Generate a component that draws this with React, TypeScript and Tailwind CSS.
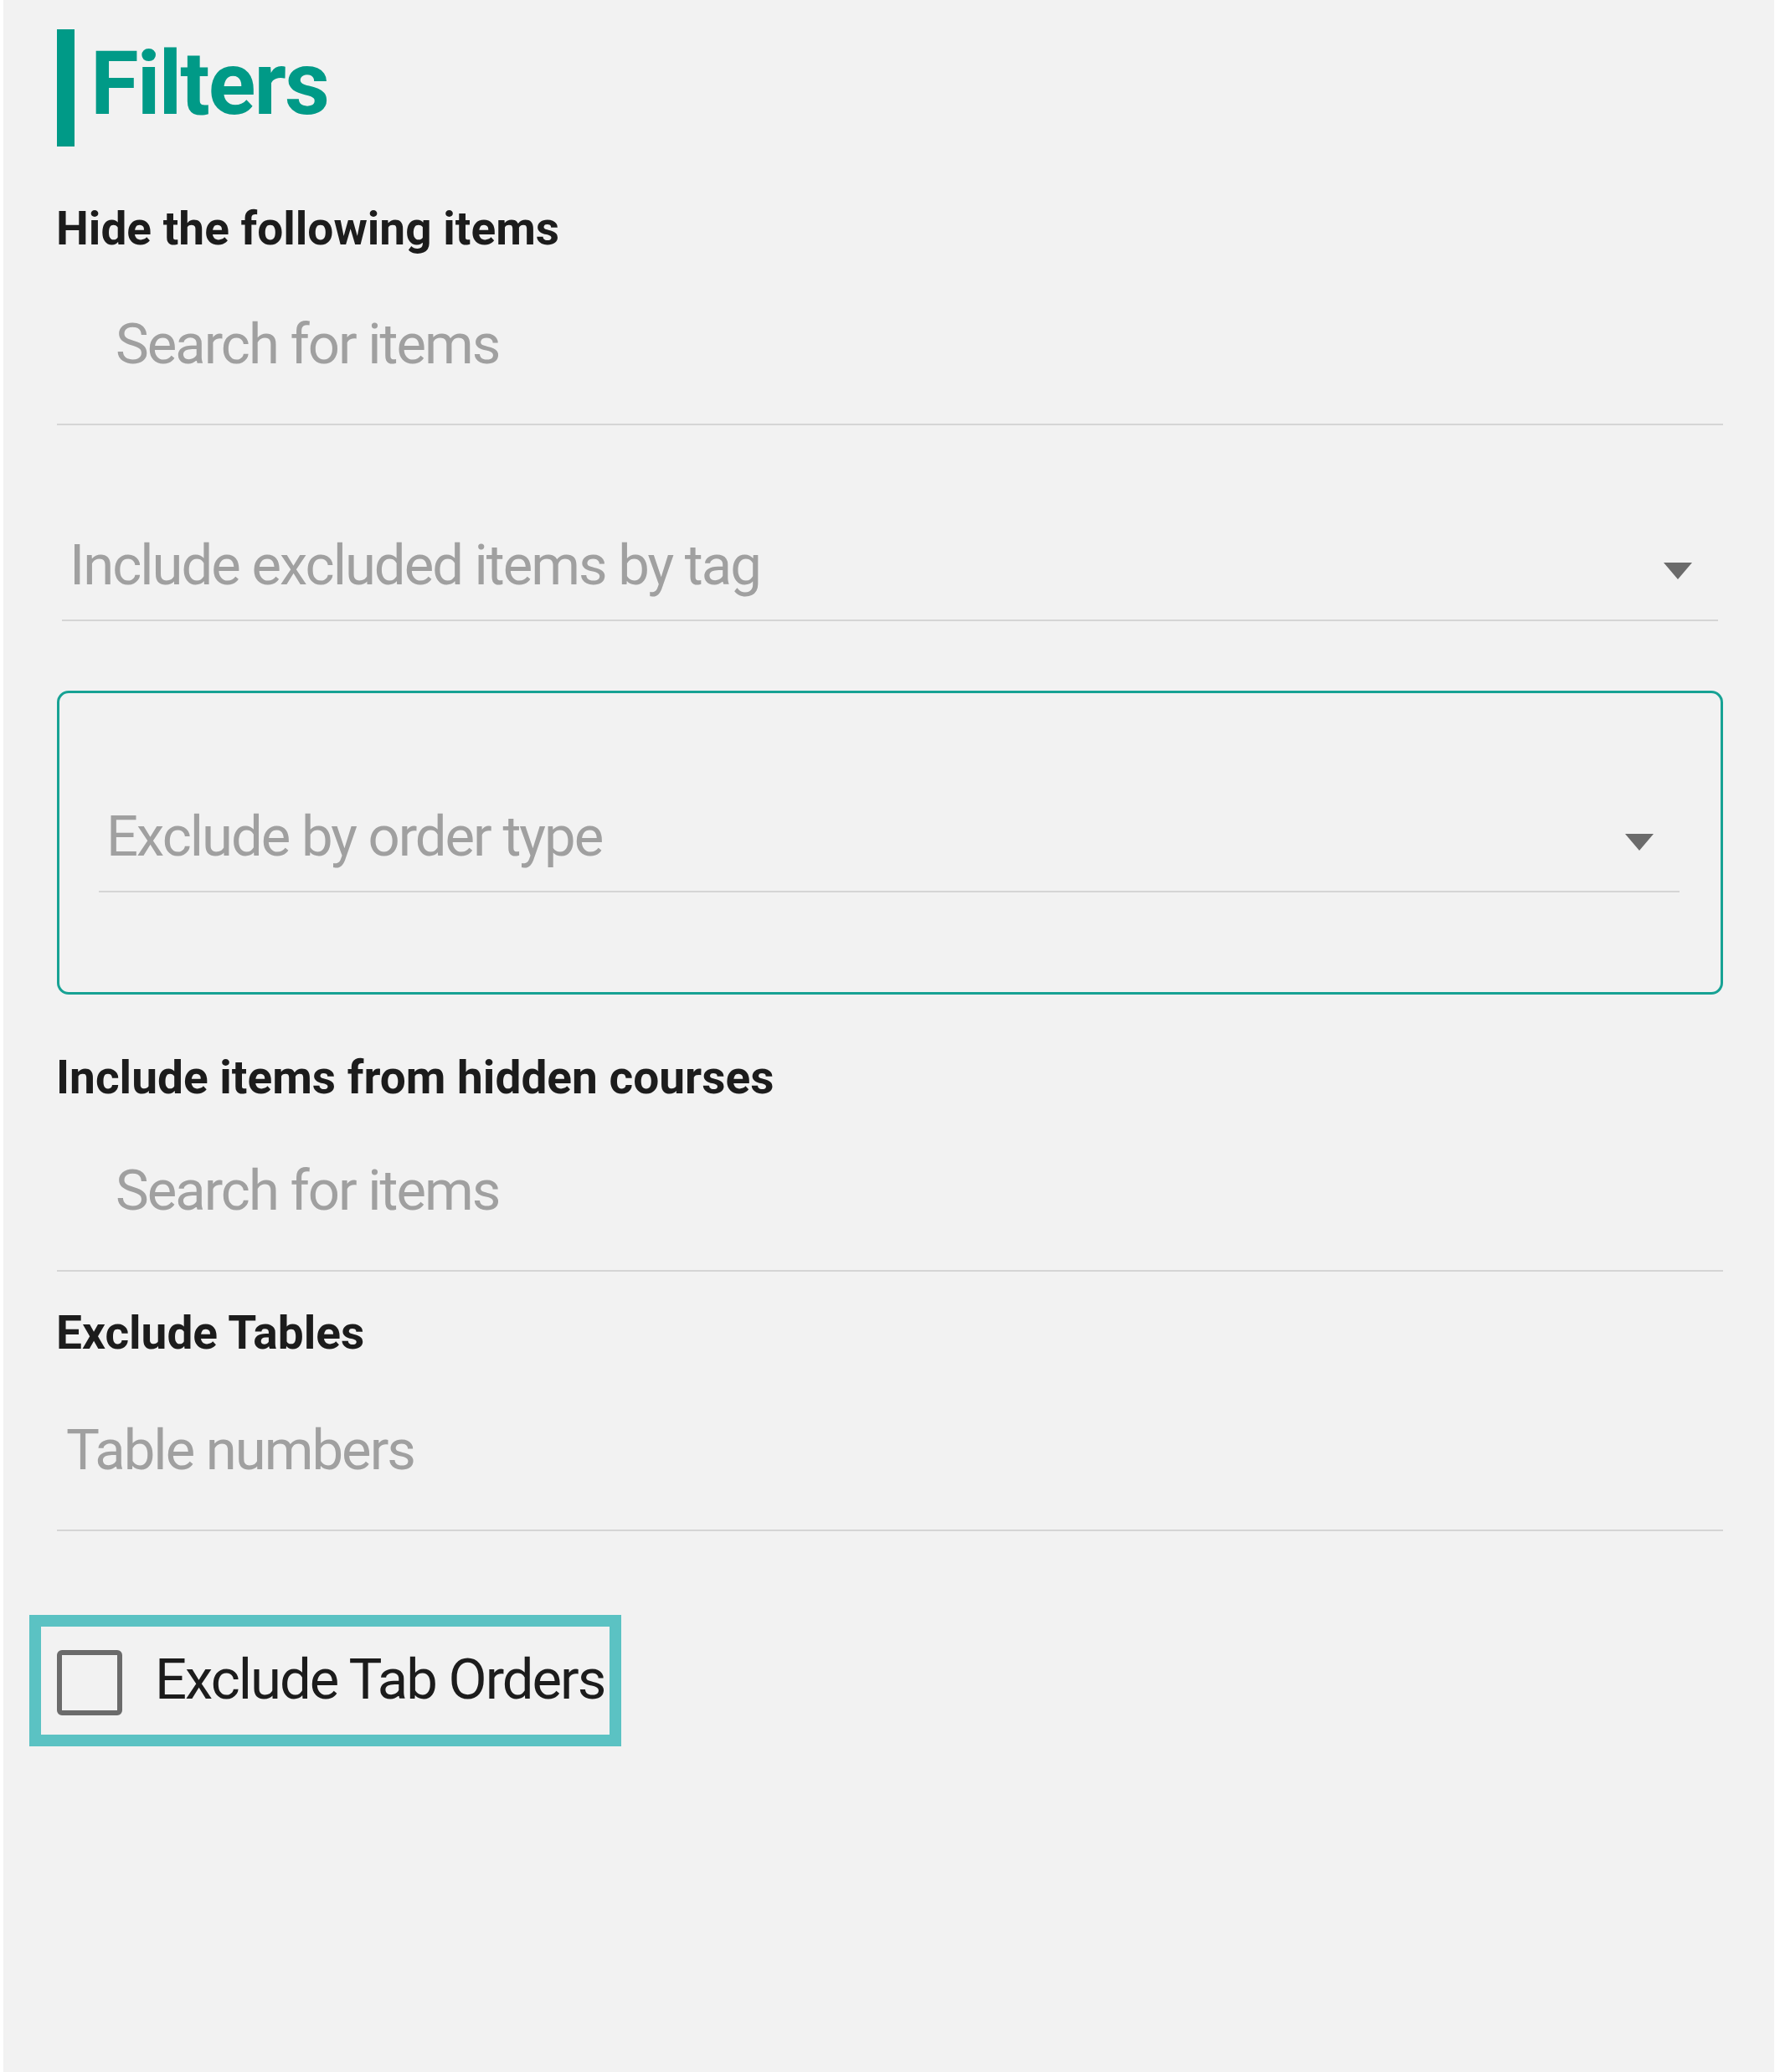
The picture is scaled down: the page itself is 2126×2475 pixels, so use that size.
import React from 'react'

const font = "font-['Roboto','Liberation_Sans',sans-serif]"

function CaretDown() {
  return (
    <svg width="34" height="20" viewBox="0 0 34 20" className="shrink-0">
      <path d="M0 0 L34 0 L17 20 Z" fill="#6b6b6b" />
    </svg>
  )
}

function SectionLabel({ children, className = '' }: { children: React.ReactNode; className?: string }) {
  return (
    <div className={`text-[55px] leading-none font-bold text-[#1c1c1c] -ml-[1px] ${className}`}>
      {children}
    </div>
  )
}

function SearchField({ placeholder, className = '' }: { placeholder: string; className?: string }) {
  return (
    <div className={`border-b-2 border-[#d5d5d5] pl-[70px] pb-[61px] ${className}`}>
      <div className="text-[67px] leading-none tracking-[-2px] text-[#a0a0a0]">{placeholder}</div>
    </div>
  )
}

function SelectField({ placeholder, className = '' }: { placeholder: string; className?: string }) {
  return (
    <div className={`flex items-start justify-between border-b-2 border-[#d5d5d5] pl-[9px] pr-[31px] pb-[31px] ${className}`}>
      <div className="text-[67px] leading-none tracking-[-2px] text-[#a0a0a0]">{placeholder}</div>
      <div className="mt-[30px]">
        <CaretDown />
      </div>
    </div>
  )
}

export default function App() {
  return (
    <div className={`min-h-[2475px] w-[2126px] bg-white ${font}`}>
      <div className="ml-[4px] w-[2115px] min-h-[2475px] bg-[#f2f2f2] pl-[64px] pr-[61px] pt-[35px]">
        <div className="flex items-start">
          <div className="h-[140px] w-[21px] bg-[#009a87]" />
          <h1 className="ml-[19px] mt-[13px] text-[105px] leading-none font-bold tracking-[-2px] text-[#009a87]">
            Filters
          </h1>
        </div>

        <SectionLabel className="mt-[71px]">Hide the following items</SectionLabel>
        <SearchField placeholder="Search for items" className="mt-[77px]" />

        <SelectField placeholder="Include excluded items by tag" className="mx-[6px] mt-[134px]" />

        <div className="mt-[83px] rounded-[14px] border-[3px] border-[#17a294] pl-[47px] pr-[49px] pt-[138px] pb-[119px]">
          <SelectField placeholder="Exclude by order type" />
        </div>

        <SectionLabel className="mt-[72px]">Include items from hidden courses</SectionLabel>
        <SearchField placeholder="Search for items" className="mt-[74px]" />

        <SectionLabel className="mt-[46px]">Exclude Tables</SectionLabel>
        <div className="mt-[79px] border-b-2 border-[#d5d5d5] pl-[11px] pb-[61px]">
          <div className="text-[67px] leading-none tracking-[-2px] text-[#a0a0a0]">Table numbers</div>
        </div>

        <label className="-ml-[33px] mt-[100px] inline-flex items-start border-[14px] border-[#5bc2c3] pl-[19px] pr-[6px] pt-[28px] pb-[23px]">
          <span className="h-[78px] w-[78px] rounded-[6px] border-[6px] border-[#6b6b6b]" />
          <span className="ml-[39px] mt-[2px] text-[67px] leading-none tracking-[-2px] text-[#1c1c1c]">
            Exclude Tab Orders
          </span>
        </label>
      </div>
    </div>
  )
}
